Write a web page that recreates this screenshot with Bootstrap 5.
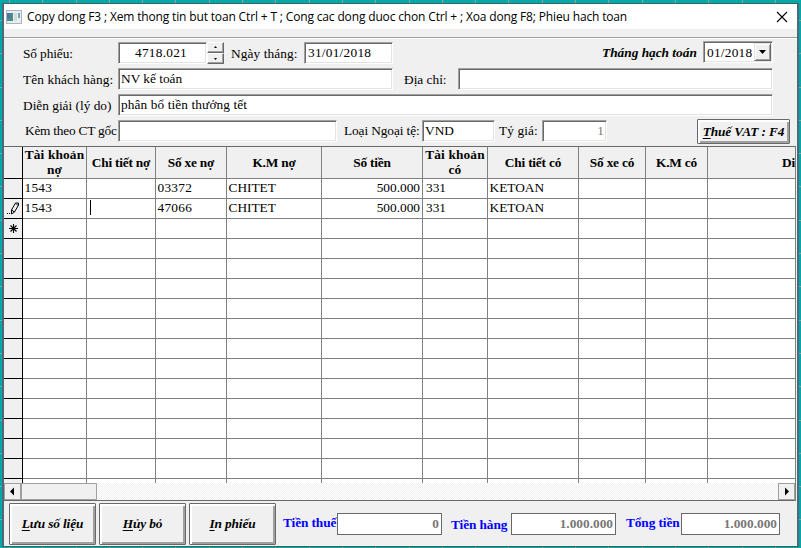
<!DOCTYPE html>
<html lang="vi">
<head>
<meta charset="utf-8">
<title>Phieu hach toan</title>
<link href="https://cdn.jsdelivr.net/npm/bootstrap@5.3.0/dist/css/bootstrap.min.css" rel="stylesheet">
<style>
body{width:801px;height:548px;overflow:hidden;padding:3px 2px 0;color:#000;font:13.33px/16px "Liberation Serif",serif;background-color:#00a8a8;
background-image:repeating-linear-gradient(90deg,transparent 0 9px,#8fa3a3 9px 10px,transparent 10px 33.3px),repeating-linear-gradient(180deg,transparent 0 20px,#8fa3a3 20px 21px,transparent 21px 33.3px)}
.win{width:797px;height:544px;background:#f0f0f0;border:1px solid #3c6464;border-left:2px solid #567;border-right:2px solid #567}
.titlebar{height:25px;font:12px/24px "Open Sans",sans-serif;padding-left:2px;letter-spacing:-.155px}
.titlebar span{white-space:pre;margin-left:1px}
.titlebar .close-x{margin-right:9px}
.form-area{height:109px;margin-top:8px;border-top:1px solid #a0a0a0;box-shadow:inset 0 1px #fff;padding-top:4px;gap:4px}
.line{height:22px;padding-left:19px}
.lb{flex:none;white-space:pre;line-height:22px;padding-top:1px}
.fld{flex:none;height:22px;background:#fff;border:1px solid;border-color:#a0a0a0 #fff #fff #a0a0a0;box-shadow:inset 1px 1px #696969,inset -1px -1px #e3e3e3;padding:0 2px;line-height:20px;white-space:pre}
.dim{color:#777}
.spin{width:17px;height:11px;background:#f0f0f0;border:1px solid;border-color:#fff #696969 #696969 #fff;box-shadow:inset -1px -1px #a0a0a0}
.spin svg,.drop svg{display:block}
.drop{width:17px;height:18px;background:#f0f0f0;border:1px solid;border-color:#e3e3e3 #696969 #696969 #e3e3e3;box-shadow:inset 1px 1px #fff,inset -1px -1px #a0a0a0}
.bt{flex:none;border:1px solid #696969;border-radius:1px;background:#f0f0f0;box-shadow:inset 2px 2px #fff,inset -2px -2px #a0a0a0;font-weight:700;font-style:italic;color:#000;padding:0;white-space:pre;line-height:16px;letter-spacing:-.12px}
.bt u{text-underline-offset:2px}
.gridbox{height:355px;width:792px;background:#fff;border-top:1px solid #696969;border-bottom:1px solid #696969;border-right:1px solid #808080;overflow:hidden}
.sheet{table-layout:fixed;width:791px;border-collapse:separate;border-spacing:0;margin:0}
.sheet th,.sheet td{border:0 solid #808080;border-width:0 1px 1px 0;padding:0 1px;overflow:hidden;white-space:nowrap}
.sheet th{height:32px;background:#f0f0f0;text-align:center;line-height:15px;vertical-align:middle;font-weight:700;letter-spacing:-.2px}
.sheet th.two{letter-spacing:.15px;line-height:14.5px}
.sheet td{height:20px;line-height:17px;vertical-align:top;padding:0 2px 0 1.5px}
.sheet tr>:first-child{background:#f0f0f0;border-color:#000;padding:0}
.sheet tr>:last-child{border-right:0}
.sheetclip{height:336px;overflow:hidden}
.n{letter-spacing:.25px}
.caret-bar{display:block;width:1px;height:15px;background:#000;margin:1px 0 0 1px}
.hbar{height:17px;background:repeating-conic-gradient(#fff 0 25%,#f0f0f0 0 50%) 0 0/2px 2px}
.sb{background:#f0f0f0;border:1px solid #a0a0a0;height:17px}
.foot{height:45px;padding:2px 0 0 5px}
.foot .bt{width:87px;height:42px;margin-right:3px}
.tot{color:#00f;font-weight:700;white-space:pre;flex:none;letter-spacing:-.1px}
.sum{flex:none;height:22px;margin-top:10px;background:#fff;border:1px solid #696969;color:#777;font-weight:700;text-align:right;line-height:19px;padding-right:2px}
</style>
<script src="https://cdn.jsdelivr.net/npm/bootstrap@5.3.0/dist/js/bootstrap.bundle.min.js"></script>
</head>
<body>
<div class="win d-flex flex-column">
  <div class="titlebar d-flex align-items-center bg-white">
    <svg width="16" height="14" viewBox="0 0 16 14" class="me-1"><rect x=".5" y=".5" width="15" height="13" fill="#e8eef0" stroke="#aab4ba"/><rect x="1" y="3" width="6" height="8" fill="#4a8c86"/><rect x="1" y="3" width="3" height="5" fill="#4c78a8"/><rect x="8" y="3" width="3" height="8" fill="#d4dadd"/><rect x="12" y="3" width="2" height="5" fill="#6fa8b8"/></svg>
    <span>Copy dong F3 ; Xem thong tin but toan Ctrl + T ; Cong cac dong duoc chon Ctrl + ; Xoa dong F8; Phieu hach toan</span>
    <svg class="close-x ms-auto" width="12" height="12" viewBox="0 0 12 12"><path d="M1 1l10 10M11 1L1 11" stroke="#000" stroke-width="1.1"/></svg>
  </div>
  <div class="form-area d-flex flex-column">
    <div class="line d-flex">
      <div class="lb" style="width:95px;letter-spacing:-.1px">Số phiếu:</div>
      <div class="fld text-end n" style="width:89px;padding-right:19px">4718.021</div>
      <div style="width:17px"><div class="spin"><svg width="15" height="9"><path d="M6 5h3L7.500 3z"/></svg></div><div class="spin"><svg width="15" height="9"><path d="M6 4h3L7.500 6z"/></svg></div></div>
      <div class="lb" style="width:80px;padding-left:7px;letter-spacing:.1px">Ngày tháng:</div>
      <div class="fld n" style="width:89px;padding-left:3px">31/01/2018</div>
      <div class="lb fw-bold fst-italic" style="width:310px;padding:0 0 0 209px">Tháng hạch toán</div>
      <div class="fld d-flex" style="width:70px;padding:1px 1px 0 3px;margin-top:-1px"><span class="flex-fill n" style="line-height:19px">01/2018</span><div class="drop"><svg width="15" height="16"><path d="M4 6h7L7.500 10z"/></svg></div></div>
    </div>
    <div class="line d-flex">
      <div class="lb" style="width:95px;letter-spacing:.1px">Tên khách hàng:</div>
      <div class="fld" style="width:275px">NV kế toán</div>
      <div class="lb" style="width:65px;padding-left:11px">Địa chỉ:</div>
      <div class="fld" style="width:315px"></div>
    </div>
    <div class="line d-flex">
      <div class="lb" style="width:95px">Diễn giải (lý do)</div>
      <div class="fld" style="width:655px;letter-spacing:.1px">phân bổ tiền thưởng tết</div>
    </div>
    <div class="line d-flex">
      <div class="lb" style="width:95px;padding:0 0 0 2px;letter-spacing:-.22px">Kèm theo CT gốc</div>
      <div class="fld" style="width:219px"></div>
      <div class="lb" style="width:85px;padding:0 0 0 7px;letter-spacing:-.1px">Loại Ngoại tệ:</div>
      <div class="fld" style="width:73px">VND</div>
      <div class="lb" style="width:47px;padding:0 0 0 4px;letter-spacing:.1px">Tỷ giá:</div>
      <div class="fld dim text-end" style="width:65px">1</div>
      <button class="bt" style="width:93px;height:25px;margin:-1px 0 0 90px"><u>T</u>huế VAT : F4</button>
    </div>
  </div>
  <div class="gridbox">
    <div class="sheetclip">
    <table class="sheet">
      <colgroup><col style="width:19px"><col style="width:64px"><col style="width:69px"><col style="width:71px"><col style="width:95px"><col style="width:101px"><col style="width:65px"><col style="width:91px"><col style="width:67px"><col style="width:62px"><col></colgroup>
      <thead><tr><th></th><th class="two">Tài khoản<br>nợ</th><th>Chi tiết nợ</th><th>Số xe nợ</th><th>K.M nợ</th><th>Số tiền</th><th class="two">Tài khoản<br>có</th><th>Chi tiết có</th><th>Số xe có</th><th>K.M có</th><th class="text-start" style="padding-left:74px">Diễn giải</th></tr></thead>
      <tbody id="rows">
        <tr><td></td><td class="n">1543</td><td></td><td class="n">03372</td><td>CHITET</td><td class="text-end">500.000</td><td style="padding-left:3px">331</td><td>KETOAN</td><td></td><td></td><td></td></tr>
        <tr><td><svg width="17" height="19" viewBox="0 0 17 19" class="d-block"><path d="M7.500 11l4-7h3v2l-4 7-3 2zM7.500 11l3 2M12 4.500l2 2" fill="none" stroke="#000"/><path d="M3 14h1v1H3zM5 14h1v1H5z"/></svg></td><td class="n">1543</td><td><span class="caret-bar"></span></td><td class="n">47066</td><td>CHITET</td><td class="text-end">500.000</td><td style="padding-left:3px">331</td><td>KETOAN</td><td></td><td></td><td></td></tr>
        <tr><td><svg width="18" height="19" viewBox="0 0 18 19" class="d-block"><path d="M9.500 5v9M5 9.500h9M6.500 6.500l6 6M12.500 6.500l-6 6" stroke="#000" stroke-width="1.1"/></svg></td><td></td><td></td><td></td><td></td><td></td><td></td><td></td><td></td><td></td><td></td></tr>
      </tbody>
    </table>
    </div>
    <div class="hbar d-flex">
      <div class="sb" style="width:17px"><svg class="d-block" width="15" height="15"><path d="M9 3.500v8l-4-4z"/></svg></div>
      <div class="sb" style="width:76px"></div>
      <div class="sb ms-auto" style="width:17px"><svg class="d-block" width="15" height="15"><path d="M6 3.500v8l4-4z"/></svg></div>
    </div>
  </div>
  <div class="foot d-flex">
    <button class="bt"><u>L</u>ưu số liệu</button><button class="bt"><u>H</u>ủy bỏ</button><button class="bt"><u>I</u>n phiếu</button>
    <div class="tot" style="width:58px;padding:12px 0 0 4px">Tiền thuế</div><div class="sum" style="width:105px">0</div>
    <div class="tot" style="width:69px;padding:14px 0 0 9px">Tiền hàng</div><div class="sum" style="width:105px">1.000.000</div>
    <div class="tot" style="width:65px;padding:12px 0 0 10px">Tổng tiền</div><div class="sum" style="width:99px">1.000.000</div>
  </div>
</div>
<script>
// Pad the sheet with empty records below the new-record row
const rows=document.getElementById('rows');
for(let i=0;i<13;i++){const r=rows.insertRow();for(let c=0;c<11;c++)r.insertCell();}
</script>
</body>
</html>
